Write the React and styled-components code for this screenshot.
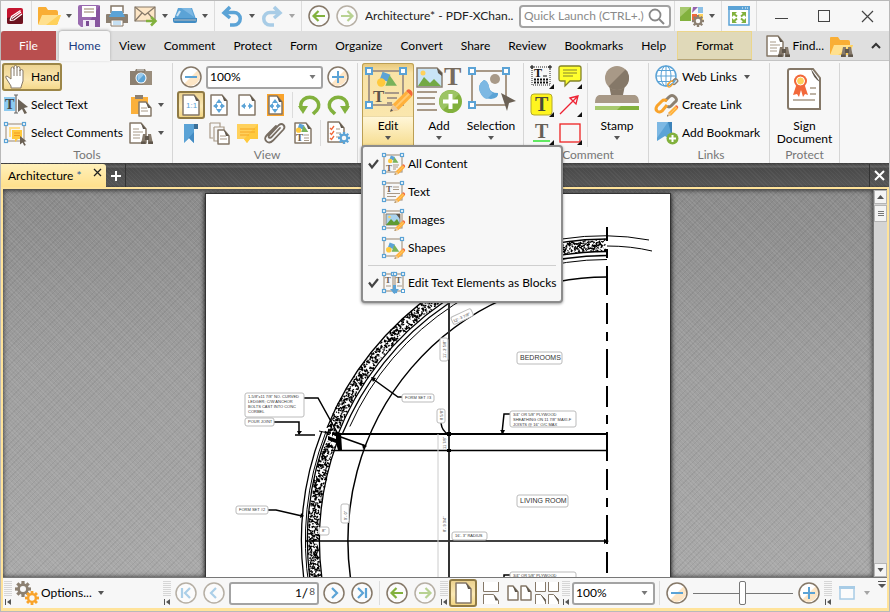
import React from "react";
import styled, { createGlobalStyle, css } from "styled-components";

const C = {
  blue: "#5ba3d6", blueLight: "#8cc0e6", brown: "#8c8071", brownDark: "#6b6155",
  tan: "#a89987", cream: "#fde6c6", orange: "#f9a32b", yellow: "#ffd15c",
  green: "#82b13d", greenLight: "#a7c96f", line: "#857868",
};

const Global = createGlobalStyle`
  html, body, #root { height: 100%; }
  body { margin: 0; overflow: hidden; }
  *, *::before, *::after { box-sizing: border-box; }
  body, button, input, select {
    font-family: Lato, "Open Sans", sans-serif;
    font-size: 12px; line-height: 16px; color: #000;
  }
  button { border: 0; padding: 0; margin: 0; background: none; }
  svg { display: block; flex: none; overflow: visible; }
`;

/* ---------- layout ---------- */
const Window = styled.div`
  height: 100vh; display: flex; flex-direction: column;
  border: 1px solid #b9b9b9; background: #f7f7f7;
`;
const TitleBar = styled.header`
  flex: none; height: 30px; display: flex; align-items: center;
`;
const AppMark = styled.div`width: 27px; display: flex; justify-content: center;`;
const Tool = styled.button`
  flex: none; width: 28px; height: 28px; display: flex; align-items: center; justify-content: center;
  opacity: ${(p) => (p.$dim ? 0.5 : 1)};
  ${(p) => p.$on && css`
    border: 2px solid #8f7a45; border-radius: 3px;
    background: linear-gradient(#ecd28f, #fbe9b5 55%, #f3d683);
  `}
`;
const CaretButton = styled(Tool)`width: 12px;`;
const Divider = styled.i`
  flex: none; width: 1px; margin: 0 3px; align-self: stretch; background: #dcdcdc;
`;
const Caption = styled.h1`
  flex: 1; min-width: 0; margin: 0 4px; font: inherit; white-space: nowrap; overflow: hidden; color: #222;
`;
const Search = styled.label`
  flex: none; width: 152px; height: 23px; display: flex; align-items: center; padding: 0 4px 0 3px;
  border: 2px solid #a3a3a3; border-radius: 4px; background: #fff;
`;
const SearchInput = styled.input`
  flex: 1; min-width: 0; border: 0; padding: 0; outline: 0; background: none;
  &::placeholder { color: #8a8a8a; opacity: 1; }
`;
const WindowButton = styled(Tool)`width: 43px;`;
const CollapseButton = styled(Tool)`width: 26px; margin-left: 8px;`;

const TabRow = styled.nav`
  flex: none; height: 30px; display: flex; align-items: stretch; background: #dfdfdf;
  border-bottom: 1px solid #c4c4c4;
`;
const Tab = styled.button`
  flex: none; padding: 0 9px; white-space: nowrap;
`;
const FileTab = styled(Tab)`
  width: 55px; margin-right: 3px; background: #b94f4f; color: #fff; border-radius: 3px 0 0 0;
`;
const ActiveTab = styled(Tab)`
  width: 51px; margin-bottom: -1px; background: #f7f7f7; color: #1b3c80;
  border-radius: 3px 3px 0 0; box-shadow: 0 -1px 3px #aaa;
`;
const FormatTab = styled(Tab)`
  width: 75px; margin-left: 2px; background: #e0d9b9; border: 1px solid #ecd68b; border-bottom-color: #b7a677;
`;
const TabTail = styled.div`
  margin-left: auto; display: flex; align-items: center;
`;
const TextButton = styled.button`
  display: flex; align-items: center; gap: 2px; white-space: nowrap; margin-right: 3px;
`;

const Ribbon = styled.section`
  flex: none; height: 102px; display: flex; align-items: stretch; padding-top: 2px; overflow: visible;
`;
const Group = styled.div`
  flex: none; width: ${(p) => p.$w}px; padding-left: ${(p) => p.$pad ?? 4}px;
  display: flex; flex-direction: column; border-right: 1px solid #d6d6d6;
`;
const GroupBody = styled.div`flex: none; height: 84px; display: flex; justify-content: ${(p) => (p.$center ? "center" : "flex-start")};`;
const GroupLabel = styled.div`
  flex: none; text-align: center; color: #767676; line-height: 16px;
`;
const Column = styled.div`
  display: flex; flex-direction: column; align-items: flex-start; width: ${(p) => (p.$w ? p.$w + "px" : "auto")};
`;
const Row = styled.div`display: flex; align-items: center; height: 28px; align-self: stretch;`;
const RowDivider = styled(Divider)`align-self: center; height: 26px;`;
const WideTool = styled.button`
  height: 28px; display: flex; align-items: center; padding-right: 3px; white-space: nowrap; gap: 1px;
  ${(p) => p.$on && css`
    border-radius: 3px; box-shadow: inset 0 0 0 2px #9c8648;
    background: linear-gradient(#ecd28f, #fbe7b0 60%, #f3d683);
  `}
`;
const Slot = styled.span`width: ${(p) => (p.$narrow ? 18 : 28)}px; display: flex; justify-content: center;`;
const BigTool = styled.button`
  position: relative; flex: none; width: 52px; height: 84px;
  display: flex; flex-direction: column; align-items: center; line-height: 13px;
  ${(p) => p.$on && css`
    border-radius: 3px 3px 0 0; box-shadow: inset 0 0 0 1px #bb9f55;
    background: linear-gradient(#e6c678, #f9e3a6 10px, #fae6ad 53px, #d9bf78 53px, #fff6d8 54px, #f6dc8d);
  `}
`;
const BigIcon = styled.span`height: 52px; display: flex; align-items: center; margin-bottom: 4px;`;
const BigCaret = styled.span`margin-top: 4px;`;

const Combo = styled.label`
  flex: ${(p) => (p.$w ? "none" : 1)}; width: ${(p) => (p.$w ? p.$w + "px" : "auto")};
  height: 23px; display: flex; align-items: center; padding: 0 4px 0 2px; margin: 0 1px;
  border: 2px solid #a3a3a3; border-radius: 3px; background: #fff;
`;
const Choice = styled.select`
  appearance: none; flex: 1; min-width: 0; border: 0; padding: 0; background: none; outline: 0;
`;

const MenuAnchor = styled.div`position: relative; margin-right: -1px;`;
const Menu = styled.div`
  position: absolute; z-index: 5; left: -1px; top: 82px; width: 202px; padding: 3px 0 4px;
  border: 2px solid #8c8c8c; border-radius: 4px; background: #f7f7f7; box-shadow: 0 1px 3px #0006;
`;
const MenuItem = styled.button`
  width: 100%; height: 28px; display: flex; align-items: center; padding-left: 5px; white-space: nowrap;
`;
const Tick = styled.span`width: 14px; flex: none; display: flex;`;
const MenuIcon = styled.span`width: 26px; flex: none;`;
const MenuRule = styled.hr`border: 0; height: 1px; margin: 3px 5px; background: #cfcfcf;`;

const DocTabs = styled.nav`
  flex: none; height: 24px; display: flex; align-items: stretch; padding-top: 1px;
  background:
    repeating-linear-gradient(45deg, #ffffff0a 0 1px, #0000 1px 3px),
    linear-gradient(#3c3c3c, #646464 4px, #4a4a4a 5px, #555 22px, #444);
`;
const DocTab = styled.div`
  width: 105px; display: flex; align-items: flex-start; justify-content: space-between;
  padding: 4px 4px 0 7px; border-radius: 0 3px 0 0; white-space: nowrap;
  background: linear-gradient(#fff0ba, #ffe08c);
`;
const DocName = styled.button``;
const Star = styled.b`font-weight: 400; color: #2b5b95;`;
const DarkTool = styled.button`
  width: 20px; display: flex; align-items: center; justify-content: center;
  border-right: ${(p) => (p.$end ? 0 : 1)}px solid #333; border-left: ${(p) => (p.$end ? 1 : 0)}px solid #333;
  margin-left: ${(p) => (p.$end ? "auto" : 0)};
`;
const Frame = styled.main`
  flex: 1; min-height: 0; display: flex; flex-direction: column;
  border: 2px solid #ffe39a; border-bottom-width: 3px;
`;
const Viewer = styled.div`flex: 1; min-height: 0; display: flex; border-top: 1px solid #555;`;
const Canvas = styled.div`
  flex: 1; min-width: 0; overflow: hidden; display: flex; justify-content: center; align-items: flex-start;
  padding-top: 3px; box-shadow: inset 0 0 5px #000b;
  background:
    repeating-linear-gradient(45deg, #ffffff14 0 1px, #0000 1px 3px),
    repeating-linear-gradient(-45deg, #0000000f 0 1px, #0000 1px 4px),
    linear-gradient(#8b8b8b, #9e9e9e 45%, #a9a9a9);
`;
const Sheet = styled.article`
  background: #fff; border: 1px solid #333; border-width: 1px 1px 0; box-shadow: 0 1px 5px #000;
  overflow: hidden;
`;
const ScrollTrack = styled.div`
  flex: none; width: 14px; display: flex; flex-direction: column; background: #d4d4d4; border-left: 1px solid #777;
`;
const ScrollButton = styled.button`
  height: 14px; display: flex; align-items: center; justify-content: center; background: #f4f4f4; border: 1px solid #b5b5b5;
`;
const ScrollThumb = styled(ScrollButton)`height: 17px; margin: 1px 0 auto;`;

const StatusBar = styled.footer`
  flex: none; height: 31px; display: flex; align-items: center; border-top: 1px solid #777; background: #f7f7f7;
`;
const Grip = styled.span`width: 10px; flex: none; display: flex; justify-content: center;`;
const OptionsBox = styled.div`width: 149px; display: flex; align-items: center;`;
const StatusDivider = styled(Divider)`align-self: center; height: 24px;`;
const PageBox = styled.label`
  flex: none; width: 90px; height: 23px; margin: 0 1px; padding: 0 2px; display: flex; align-items: center;
  border: 2px solid #a3a3a3; border-radius: 3px; background: #fff;
`;
const PageInput = styled.input`flex: 1; min-width: 0; border: 0; padding: 0; text-align: right; background: none;`;
const PageTotal = styled.span`display: flex; align-items: center; gap: 1px; font-size: 14px;`;
const PageCount = styled.small`font-size: 10px; line-height: 12px; align-self: flex-start; color: #555;`;
const Slider = styled.input`
  appearance: none; flex: 0 1 104px; min-width: 60px; height: 26px; margin: 0; padding: 0 2px; background: none;
  &::-webkit-slider-runnable-track { height: 1px; background: #777; }
  &::-webkit-slider-thumb {
    appearance: none; width: 7px; height: 24px; margin-top: -12px;
    border: 1px solid #777; border-radius: 2px; background: #fff;
  }
`;
const Tail = styled.div`margin-left: auto; align-self: flex-start; padding: 3px 1px 0 0;`;

/* ---------- icons ---------- */
const Ico = ({ s = 24, w = s, h = s, vb, children }) => (
  <svg width={w} height={h} viewBox={vb || `0 0 ${w} ${h}`} fill="none" aria-hidden="true">{children}</svg>
);
const Caret = ({ c = "#555", w = 6 }) => <Ico w={w} h={4} vb="0 0 6 4"><path d="M0 0h6L3 4z" fill={c} /></Ico>;
const Drop = ({ label, dim }) => <CaretButton aria-label={label} $dim={dim}><Caret /></CaretButton>;
const Pencil = ({ x = 0, y = 0, k = 1 }) => (
  <g transform={`translate(${x} ${y}) scale(${k})`}>
    <path d="M0 12l1.500-4L8.500 1l3 3-7 7z" fill="#ffb03b" />
    <path d="M0 12l1.500-4 3 3z" fill="#e8c9a0" /><path d="M0 12l.6-1.600 1 1z" fill="#555" />
    <path d="M8.500 1q1-1.500 2.500-.3t.5 3.300z" fill="#f2683a" />
    <path d="M3 9.500L10 2.500" stroke="#ffc971" />
  </g>
);
const Nodes = ({ x, y, w, h, r = 3, c = C.tan }) => (
  <g>
    <rect x={x} y={y} width={w} height={h} stroke={c} strokeWidth={r > 3 ? 2 : 1.2} />
    {[[x, y], [x + w, y], [x, y + h]].map(([a, b]) => (
      <rect key={`${a}-${b}`} x={a - r / 2} y={b - r / 2} width={r} height={r} fill="#fff" stroke={C.blue} strokeWidth={r > 3 ? 2 : 1.200} />
    ))}
  </g>
);
const LetterT = ({ x, y, s, c = "#6b6155" }) => (
  <text x={x} y={y} fontSize={s} fontFamily="Liberation Serif, serif" fontWeight="700" fill={c}>T</text>
);
const Paper = ({ x = 4, y = 1, w = 15, h = 20, c = C.line, fill = "#fff" }) => (
  <g>
    <path d={`M${x} ${y}h${w - 5}l5 6v${h - 6}h${-w}z`} fill={fill} stroke={c} strokeWidth="1.500" strokeLinejoin="round" />
    <path d={`M${x + w - 5} ${y}l5 6h-3z`} fill="#5e564c" />
  </g>
);
const Binoculars = ({ x, y }) => (
  <g transform={`translate(${x} ${y})`} fill="#85796b">
    <path d="M1 6l1-5h3v10H0zM11 6l-1-5H7v10h5z" /><path d="M4 3h4v4H4z" fill="#5f564b" />
    <path d="M0 8.500h4.500V11H0zM7.500 8.500H12V11H7.500z" fill="#5f564b" />
  </g>
);
const Gear = ({ x, y, r = 6, c = C.brown, hole = "#f7f7f7" }) => (
  <g transform={`translate(${x} ${y})`}>
    {[0, 45, 90, 135].map((a) => (
      <rect key={a} x={-r / 5} y={-r} width={(r * 2) / 5} height={r * 2} fill={c} transform={`rotate(${a})`} />
    ))}
    <circle r={r * 0.72} fill={c} /><circle r={r * 0.38} fill={hole} />
  </g>
);
const LogoIcon = () => (
  <Ico s={16}><rect width="16" height="16" rx="2" fill="#c4152f" /><path d="M0 10l16-4v8a2 2 0 0 1-2 2H2a2 2 0 0 1-2-2z" fill="#6d1420" />
    <path d="M3 12.500l1.500-4 9-6M3 12.500l4-.5 8-6M5 10.500l9-6.500" stroke="#fff" strokeWidth="1.200" /></Ico>
);
const FolderIcon = ({ find }) => (
  <Ico s={24}><path d="M1 4q0-1 1-1h7l2 3h8q2 0 2 2v12H1z" fill="#f9ae35" />
    <path d="M5 11h19l-4 10H1z" fill="#ffe08e" /><path d="M9 21L22 11h2l-4 10z" fill="#ffd15c" />
    {find && <Binoculars x={12} y={12} />}</Ico>
);
const SaveIcon = () => (
  <Ico s={22}><path d="M0 2q0-2 2-2h18q2 0 2 2v18q0 2-2 2H3l-3-3z" fill="#9a6bb0" /><path d="M22 0v22H8z" fill="#87549f" />
    <path d="M4 1h14v11H4z" fill="#fff" /><path d="M6 4h10M6 7h10" stroke="#b9aa98" strokeWidth="1.500" /><path d="M5 15h12v7H5z" fill="#f0e8f4" /><path d="M8 16h3v5H8z" fill="#7b4b93" /></Ico>
);
const PrintIcon = () => (
  <Ico s={22}><path d="M5 8V1h12v7" fill="#fff" stroke={C.line} strokeWidth="1.500" /><path d="M1 9h20q1 0 1 1v8H0v-8q0-1 1-1z" fill={C.brown} />
    <path d="M6 6h10l3 6H3z" fill={C.blue} /><path d="M5 15h12v6H5z" fill="#fff" stroke={C.line} /><path d="M7 17h8M7 19h8" stroke={C.blueLight} /></Ico>
);
const MailIcon = () => (
  <Ico s={23}><path d="M1 2h20v14H1z" fill={C.cream} stroke={C.line} strokeWidth="1.200" /><path d="M1 2l10 8L21 2M1 16l7-8M21 16l-7-8" stroke={C.line} strokeWidth="1.200" />
    <path d="M12 16h8M17 12l4.500 4-4.500 4.500" stroke={C.green} strokeWidth="2.500" /></Ico>
);
const ScanIcon = () => (
  <Ico s={24}><path d="M5 4h14l4 11H1z" fill={C.blue} /><path d="M8 4h10l3 9z" fill="#7db8e3" /><path d="M7 7l-3 5" stroke="#c9e2f4" strokeWidth="2" /><path d="M0 14h24v3q0 2-2 2H2q-2 0-2-2z" fill="#418cc4" /><path d="M1 16h22" stroke="#bbb" /></Ico>
);
const UndoIcon = ({ flip }) => (
  <Ico s={22}><g transform={flip ? "translate(22 0) scale(-1 1)" : undefined}><path d="M9 2L3 8l6 5M4 7.500h9a6 6 0 0 1 0 12.500H9" stroke={C.blue} strokeWidth="3.500" /></g></Ico>
);
const Round = ({ dim, fill = "#fbfbfb", children }) => (
  <Ico s={22}><circle cx="11" cy="11" r="10" fill={fill} stroke={dim ? "#b6afa4" : C.line} strokeWidth="1.500" />{children}</Ico>
);
const ArrowRound = ({ right, dim }) => (
  <Round dim={dim}><path d={right ? "M5 11h11M11.500 6l5 5-5 5" : "M17 11H6M10.500 6l-5 5 5 5"} stroke={C.green} strokeWidth="2.200" opacity={dim ? 0.55 : 1} /></Round>
);
const StepRound = ({ d, dim }) => <Round dim={dim}><path d={d} stroke={C.blue} strokeWidth="2.200" opacity={dim ? 0.5 : 1} /></Round>;
const ZoomRound = ({ plus }) => (
  <Ico s={22}><circle cx="11" cy="11" r="10" fill="#fff" /><path d="M18 4A10 10 0 0 1 4 18z" fill={C.cream} /><circle cx="11" cy="11" r="10" stroke={C.line} strokeWidth="1.500" />
    <path d={plus ? "M5 11h12M11 5v12" : "M5 11h12"} stroke={C.blue} strokeWidth="2" /></Ico>
);
const LensIcon = () => <Ico s={17}><circle cx="7" cy="7" r="5.500" stroke="#888" strokeWidth="1.800" /><path d="M11 11l5 5" stroke="#888" strokeWidth="2" /></Ico>;
const UiIcon = () => (
  <Ico s={24}><path d="M0 3h11v14H0z" fill={C.green} /><path d="M0 3h11L0 13z" fill={C.greenLight} /><path d="M13 3h5l-6 6z" fill="#9462ad" /><path d="M18 3h5v6h-5z" fill={C.blueLight} />
    <path d="M12 10h5v7h-5z" fill="#f2683a" /><path d="M18 10h5v7h-5z" fill={C.yellow} /><Gear x={18} y={17} r={6} /></Ico>
);
const FullIcon = () => (
  <Ico s={22}><path d="M1 2h20v18H1z" fill="#fff" stroke={C.blue} strokeWidth="1.500" /><path d="M0 1h22v4H0z" fill={C.blue} /><path d="M14 3h1M17 3h1M19 3h1" stroke="#fff" />
    <g fill={C.green}><path d="M4 7h5L4 12zM18 7h-5l5 5zM4 18h5l-5-5zM18 18h-5l5-5z" /></g><path d="M5 8l4 3.500M17 8l-4 3.500M5 17l4-3.500M17 17l-4-3.500" stroke={C.green} strokeWidth="2" /></Ico>
);
const PaperFind = ({ s = 24 }) => (
  <Ico s={s}><Paper x={1} y={2} w={16} h={20} /><path d="M4 8h6M4 11h10M4 14h7M4 17h7" stroke={C.tan} strokeWidth="1.200" /><Binoculars x={12} y={12} /></Ico>
);
const HandIcon = () => (
  <Ico s={24}><path d="M7 21L2 13q-1-2 1-2l4 3V4q0-2 1.500-2T10 4V2q0-1.500 1.500-1.500T13 2v1q0-1.500 1.500-1.500T16 3.500V6q0-1.500 1.500-1.500T19 6v10l-2 6v1H7z" fill="#fff" stroke={C.line} strokeWidth="1" /><path d="M10 4v7M13 3v8M16 5v6" stroke={C.line} /></Ico>
);
const Cursor = ({ x, y, k = 1 }) => <path transform={`translate(${x} ${y}) scale(${k})`} d="M0 0l10 8-4 1 3 5-2.500 1L4 10l-4 3z" fill="#6b6155" />;
const SelectTextIcon = () => (
  <Ico s={24}><path d="M0 4h11v14H0z" fill="#8ccaf0" /><LetterT x={1} y={16} s={14} c="#444" /><path d="M10 2h4M10 20h4M12 2v18" stroke="#666" strokeWidth="1.200" /><Cursor x={14} y={6} k={1} /></Ico>
);
const SelectCommentsIcon = () => (
  <Ico s={24}><Nodes x={2} y={3} w={18} h={17} /><path d="M5 6h11v2H7v8H5z" fill="#ffdf8c" /><path d="M8 9h10v9h-4l-3 3v-3H8z" fill="#ffc93c" /><path d="M10 12h6M10 14.500h6" stroke="#f29a1f" /><Cursor x={16} y={15} k={0.65} /></Ico>
);
const CameraIcon = () => (
  <Ico s={22}><path d="M0 5h5l1-2h9l1 2h6v14H0z" fill={C.brown} /><path d="M15 5h7v14h-9z" fill="#9b8e7d" /><circle cx="11" cy="12" r="5.500" fill="#fff" /><circle cx="11" cy="12" r="4.500" fill={C.blue} /><path d="M7.500 9a4.500 4.500 0 0 1 6.500-.5L8 15z" fill="#9bcbed" /><path d="M7 4h7" stroke="#ddd" /></Ico>
);
const PasteIcon = () => (
  <Ico s={22}><path d="M1 3h17v17H1z" fill="#fbb03b" /><path d="M5 1h8v4H5z" fill={C.brown} /><Paper x={9} y={8} w={12} h={14} /><path d="M11 14h6M11 17h7" stroke={C.tan} /></Ico>
);
const FitPage = ({ mode }) => (
  <Ico s={22}>{mode === "visible" && <path d="M3 0h17v22H3z" fill="#f9a32b" />}<Paper x={mode === "visible" ? 5 : 3} y={mode === "visible" ? 2 : 1} w={mode === "visible" ? 13 : 16} h={mode === "visible" ? 18 : 20} />
    {mode === "actual" && <text x="6" y="14" fontSize="8" fill={C.blue} fontFamily="Liberation Sans, sans-serif">1:1</text>}
    {mode !== "actual" && <path d="M5 12l4-3v6zM17 12l-4-3v6z" fill={C.blue} />}
    {(mode === "page" || mode === "visible") && <path d="M11 5l-3 4h6zM11 19l-3-4h6z" fill={C.blue} />}
    {mode !== "actual" && <path d="M8 12h2M12 12h2" stroke={C.blue} strokeWidth="1.500" />}</Ico>
);
const RotateIcon = ({ flip }) => (
  <Ico s={24}><g transform={flip ? "translate(24 0) scale(-1 1)" : undefined}><path d="M4.500 17A9 8 0 1 1 19 17l-4 4" stroke={C.green} strokeWidth="3.500" /><path d="M0 13h10l-5 8z" fill={C.green} /></g></Ico>
);
const BookmarkIcon = ({ add }) => (
  <Ico s={24}>{add ? <g><path d="M2 1h15v19l-7-5-8 5z" fill={C.blue} /><path d="M13 1h4v15z" fill="#3c82b9" /><path d="M2 1h11L2 17z" fill="#7db8e3" /><circle cx="17.500" cy="17.500" r="6" fill={C.green} /><path d="M14 17.500h7M17.500 14v7" stroke="#fff" strokeWidth="2" /></g>
    : <g><path d="M5 3h10v19l-5-5-5 5z" fill={C.blue} /><path d="M15 3h4v5h-4z" fill="#3c6f96" /><path d="M5 22l10-11v11l-5-5z" fill="#438bc3" /></g>}</Ico>
);
const PagesIcon = () => <Ico s={23}><path d="M2 1h10v4M2 1v15h3M6 5h10v3M6 5v14h4" stroke={C.tan} strokeWidth="1.200" /><Paper x={10} y={8} w={11} h={14} /><path d="M12 14h6M12 17h7" stroke={C.tan} /></Ico>;
const CommentIcon = () => <Ico s={23}><path d="M1 2h21v15h-8l-3 4-3-4H1z" fill={C.yellow} /><path d="M22 2v15h-8l-3 4-3-4z" fill="#ffc93c" /><path d="M4 7h15M4 10h15M4 13h9" stroke="#f5a623" /></Ico>;
const ClipIcon = () => <Ico s={24}><path d="M17 7L8.500 16q-1.500 1.500-2.500.5t.5-2.500L16 4q2.500-2 4.500 0t0 4.500L10 19.500q-3.500 3.500-6.500.8t.5-6.300L13 5" stroke="#776d62" strokeWidth="1.800" strokeLinecap="round" /></Ico>;
const Shapes = ({ x = 0, y = 0, k = 1 }) => (
  <g transform={`translate(${x} ${y}) scale(${k})`}><path d="M4 2h8v7H4z" fill={C.blue} transform="rotate(20 8 5)" /><path d="M12 4l7 10H8z" fill="#79b25a" /><circle cx="4" cy="11" r="4" fill="#ffc93c" /></g>
);
const ContentPane = () => <Ico s={22}><Paper x={3} y={1} w={16} h={20} /><Shapes x={4} y={1} k={0.65} /><LetterT x={4} y={19} s={11} /><path d="M12 13h5M12 16h5M12 18.500h5" stroke={C.tan} /></Ico>;
const PaneOptions = () => <Ico s={24}><Paper x={2} y={1} w={16} h={20} /><path d="M4 7l1.500 1.500L8 5M4 12l1.500 1.500L8 10M4 17l1.500 1.500L8 15" stroke="#f2683a" strokeWidth="1.300" /><path d="M10 8h4M10 12h5M10 16h4" stroke={C.tan} /><Gear x={18} y={17} r={6} c={C.blue} /></Ico>;

const EditBig = () => (
  <Ico w={48} h={48}><Nodes x={5} y={6} w={34} h={34} r={6} /><Shapes x={13} y={6} k={1.050} /><LetterT x={9} y={37} s={17} c="#5f564b" /><path d="M21 28h14M23 33h10M23 38h5" stroke={C.tan} strokeWidth="2" />
    <Pencil x={26} y={24} k={1.900} /></Ico>
);
const AddBig = () => (
  <Ico w={48} h={48}><path d="M2 3h20l5 5v14H2z" fill="#c9e4f6" stroke={C.brown} strokeWidth="1.500" /><path d="M3 21l6-9 6 6 4-4 7 7z" fill="#73a945" /><circle cx="8" cy="8" r="2.500" fill={C.yellow} /><path d="M22 3l5 5v3l-4-3z" fill="#5e564c" />
    <LetterT x={29} y={20} s={26} c="#776b5e" /><path d="M2 27h20M2 33h18M2 39h18M2 45h20" stroke={C.tan} strokeWidth="2" /><circle cx="35.500" cy="36.500" r="11.500" fill={C.green} /><path d="M27 29a11.500 11.500 0 0 1 17 0L28 45a11.500 11.500 0 0 1-1-16z" fill="#9cc463" /><path d="M28 36.500h15M35.500 29v15" stroke="#fff" strokeWidth="4" /></Ico>
);
const SelectionBig = () => (
  <Ico w={48} h={48}><Nodes x={5} y={6} w={34} h={34} r={6} /><circle cx="28" cy="14" r="5" fill={C.tan} /><path d="M17 15q-7 5-4 12t11 7q8-1 7-6-8 0-9-6t-5-7z" fill={C.blue} /><path d="M17 15q-7 5-4 12t7 7l6-6q-4-2-4-6t-5-7z" fill="#7db8e3" /><path d="M34 28l15 8-7 2-2 8z" fill="#6b6155" /></Ico>
);
const StampBig = () => (
  <Ico w={46} h={48}><path d="M18 20h10l1 10h12q4 1 4 8H1q0-7 4-8h12z" fill={C.tan} /><path d="M15 20h16l-2 10H17z" fill="#857868" /><circle cx="23" cy="13" r="12" fill={C.tan} /><path d="M31.500 4.500A12 12 0 0 1 14.500 21.500z" fill="#857868" /><path d="M1 41h44v4H1z" fill={C.green} /><path d="M1 41h26l-4 4H1z" fill={C.greenLight} /></Ico>
);
const SignBig = () => (
  <Ico w={36} h={48}><path d="M3 4h23l7 9v31H3q-2 0-2-2V6q0-2 2-2z" fill="#fff" stroke={C.line} strokeWidth="2" /><path d="M24 4l9 13q-7-4-9-13z" fill="#5e564c" />
    <path d="M9 21l-3 9 4-1 2 3 2-7 2 7 2-3 3 1-3-9z" fill="#f2683a" /><circle cx="13.500" cy="16" r="6.500" fill="#f2683a" /><circle cx="13.500" cy="16" r="4" fill={C.yellow} stroke="#fff" /><path d="M23 23h6M23 29h6M6 35h22" stroke={C.tan} strokeWidth="1.500" /></Ico>
);
const Corner = () => <path d="M24 19v5h-5z" fill="#111" />;
const TypeIcon = () => <Ico s={24}><rect x="2" y="2" width="18" height="18" stroke="#222" strokeDasharray="1 1" /><path d="M1 1h2v2H1zM19 1h2v2h-2z" stroke="#000" fill="#fff" /><LetterT x={4} y={12} s={12} c="#111" /><path d="M13 11h4" stroke="#111" /><path d="M4 14.500h14M4 17.500h14" stroke="#111" strokeWidth="2" strokeDasharray="2 1" /><Corner /></Ico>;
const StickyIcon = () => <Ico s={24}><path d="M3 1h18q2 0 2 2v11q0 2-2 2H12l-5 5v-5H3q-2 0-2-2V3q0-2 2-2z" fill="#ffff2e" stroke="#84842a" strokeWidth="1.300" /><path d="M5 5h14M5 8h14M5 11h10" stroke="#85852d" /><Corner /></Ico>;
const HighlightIcon = () => <Ico s={24}><rect x="1" y="1" width="21" height="21" rx="3" fill="#fff51f" stroke="#b3a92a" /><LetterT x={5} y={18} s={20} c="#4a4a3a" /><Corner /></Ico>;
const ArrowIcon = () => <Ico s={24}><path d="M2 21L19 4M12 5l8-2-2 8z" stroke="#e23" strokeWidth="1.300" /><Corner /></Ico>;
const UnderlineIcon = () => <Ico s={24}><LetterT x={5} y={17} s={20} c="#666058" /><path d="M3 20h17" stroke="#2fe52f" strokeWidth="1.500" /><Corner /></Ico>;
const RectIcon = () => <Ico s={24}><rect x="2" y="3" width="20" height="18" stroke="#e22" strokeWidth="1.300" /><Corner /></Ico>;
const Chain = ({ x = 0, y = 0, k = 1 }) => (
  <g transform={`translate(${x} ${y}) scale(${k})`}><path d="M10 9l4-4q3-3 6 0t0 5l-4 4q-2 2-4 0" stroke={C.brown} strokeWidth="3" /><path d="M12 13l-5 6q-3 2-5 0t0-5l5-5q2-2 5 0" stroke={C.orange} strokeWidth="3" /></g>
);
const WebIcon = () => <Ico s={24}><circle cx="11" cy="11" r="10" fill="#fff" stroke={C.blue} strokeWidth="1.500" /><path d="M11 1v20M1 11h20M3 5.500h16M3 16.500h16" stroke={C.blue} /><ellipse cx="11" cy="11" rx="5" ry="10" stroke={C.blue} /><Chain x={12} y={12} k={0.5} /></Ico>;
const LinkIcon = () => <Ico s={24}><Chain x={0} y={-1} /><Pencil x={12} y={12} k={0.95} /></Ico>;
const MenuArt = ({ kind }) => (
  <Ico s={24}>
    {kind === "blocks" ? (
      <g><Nodes x={2} y={3} w={9} h={17} r={3} /><Nodes x={13} y={3} w={8} h={17} r={3} /><rect x="19.500" y="18.500" width="3" height="3" fill="#fff" stroke={C.blue} /><LetterT x={3} y={12} s={9} /><LetterT x={13.500} y={12} s={9} /><path d="M4 15h5M15 15h5" stroke={C.tan} /><path d="M8 18h3v-4h3v4h3l-4.500 5z" fill={C.blue} /></g>
    ) : (
      <g><Nodes x={2} y={3} w={18} h={17} r={3} />
        {kind === "all" && <g><Shapes x={6} y={3} k={0.55} /><LetterT x={4} y={19} s={9} /><path d="M11 13h6M11 15h5M11 17h3" stroke={C.tan} /></g>}
        {kind === "text" && <g><LetterT x={4} y={12} s={9} /><path d="M11 7h6M11 9.500h6M5 13.500h13M5 16.500h9" stroke={C.tan} /></g>}
        {kind === "images" && <g><path d="M4 6h14v11H4z" fill="#a9d3ef" stroke={C.brown} /><path d="M4 17l5-6 3 3 3-3 3 5v1z" fill="#5f9a33" /><circle cx="7.500" cy="9" r="1.300" fill={C.yellow} /><path d="M14 6h4v5z" fill="#5e564c" /></g>}
        {kind === "shapes" && <Shapes x={4} y={6} k={0.7} />}
        <Pencil x={12.500} y={12} k={0.9} /></g>
    )}
  </Ico>
);
const TickIcon = () => <Ico w={11} h={10}><path d="M1 4.500L4 8.500L10 1" stroke="#444" strokeWidth="2.200" /></Ico>;
const GripIcon = () => (
  <Ico w={8} h={24}><path d="M1 0v16M3 0v16M5 0v16M7 0v16" stroke="#b5b5b5" strokeDasharray="1 1" /><path d="M1.500 18v6" stroke="#555" /><path d="M7 18v6l-4-3z" fill="#555" /></Ico>
);
const Single = () => <Ico w={17} h={22}><Paper x={1} y={1} w={15} h={20} /></Ico>;
const Continuous = () => <Ico w={17} h={22}><path d="M.5 0v9.500h15V0" fill="#fff" stroke={C.line} /><path d="M.5 22v-9.500h10l5 6V22" stroke={C.line} fill="#fff" /><path d="M10.500 12.500l5 6h-3z" fill="#5e564c" /></Ico>;
const Facing = () => <Ico w={24} h={22}><Paper x={1} y={4} w={10} h={14} /><Paper x={14} y={4} w={10} h={14} /></Ico>;
const FacingContinuous = () => <Ico w={24} h={22}><path d="M.5 0v9.500h10V0M13.500 0v9.500h10V0" fill="#fff" stroke={C.line} /><path d="M.5 22v-9.500h5l5 5V22M13.500 22v-9.500h5l5 5V22" fill="#fff" stroke={C.line} /><path d="M5.500 12.500l5 5v3zM18.500 12.500l5 5v3z" fill="#5e564c" /></Ico>;

/* ---------- architectural drawing ---------- */
const CX = 607, CY = 541;
const at = (r, deg) => [CX - r * Math.cos((deg * Math.PI) / 180), CY - r * Math.sin((deg * Math.PI) / 180)];
const arc = (r, a, b) => {
  const [x1, y1] = at(r, a), [x2, y2] = at(r, b);
  return `M${x1} ${y1}A${r} ${r} 0 0 1 ${x2} ${y2}`;
};
const speckle = (r1, r2, a, b, count) => {
  let seed = 7, d = "";
  const rnd = () => ((seed = (seed * 16807) % 2147483647) / 2147483647);
  for (let i = 0; i < count; i++) {
    const [x, y] = at(r1 + 1 + rnd() * (r2 - r1 - 2), a + rnd() * (b - a));
    d += `M${x.toFixed(1)} ${y.toFixed(1)}l${(rnd() * 4 - 2).toFixed(1)} ${(rnd() * 4 - 2).toFixed(1)}`;
  }
  return d;
};
const Note = ({ x, y, w, h, lines, s = 5 }) => (
  <g>
    <rect x={x} y={y} width={w} height={h} rx="2" fill="#fff" stroke="#bbb" />
    {lines.map((t, i) => <text key={t} x={x + 3} y={y + s + 1 + i * (s + 1)} fontSize={s} fill="#333">{t}</text>)}
  </g>
);
const Upright = ({ x, y, w = 8, h, t }) => (
  <g><rect x={x} y={y} width={w} height={h} rx="2" fill="#fff" stroke="#bbb" />
    <text transform={`translate(${x + w - 2} ${y + h - 3}) rotate(-90)`} fontSize="4" fill="#333">{t}</text></g>
);
const Plan = () => (
  <svg width="464" height="384" viewBox="206 194 464 384" fill="none" stroke="none" fontFamily="Liberation Sans, sans-serif" role="img" aria-label="Architecture section">
    <g stroke="#000" strokeWidth="1.300">
      <path d={arc(302, 22, 90)} /><path d={arc(289.500, 21, 90)} /><path d={arc(285.500, 22, 90)} /><path d={arc(281.500, 24, 90)} strokeWidth="1" />
      <path d={arc(299.500, -9, 22)} /><path d={arc(287.500, -9, 20)} />
      <path d={arc(305.500, -9, 21)} /><path d={arc(301.500, -9, 21)} strokeWidth="1" />
      <path d="M319 431l9 2M562 239q45-7 87 1M607 246q24 0 45 5" strokeWidth="1" />
      <path d="M350.500 578A259 264 0 0 1 607 277" strokeWidth="1.500" />
      <path d={speckle(289.500, 302, 21, 90, 1350)} /><path d={speckle(287.500, 299.500, -8, 20, 540)} />
    </g>
    <path d="M336 432l5 1 1 17h-4l-2-7zM328 436l8 3v4l-8-3z" fill="#000" />
    <g stroke="#000">
      <path d="M332 434h275" strokeWidth="2" /><path d="M331 450.500h276" strokeWidth="1.500" /><path d="M306 541h302" strokeWidth="1.500" />
      <path d="M449 300v278" stroke="#333" strokeWidth="2" /><path d="M438 434v144" stroke="#ccc" />
      <path d="M607 227v351" strokeWidth="2" strokeDasharray="9 8 29 8 21 8" strokeDashoffset="61" />
      <path d="M304 398h14l20 36M274 422h25v12M295 435h20M373 379l25 18h5M268 510h8l26 6M512 414h-8l-2 19M441 423q1 8 7 11M338 436l28 10M512 575h-8v3" strokeWidth="1.500" />
    </g>
    <path d="M371 377l5 1-3 4zM301 513l3 3-4 2zM500 430h5l-2 4zM297 431h5l-3 4zM604 539l5 2-5 3zM362 444l5 2-4 3zM447 432h4v4h-4zM447 449h4v3h-4z" fill="#000" />
    <Note x={245} y={393} w={59} h={24} lines={['1-5/8"x11 7/8" NO. CURVED', "LEDGER; C/W ANCHOR", "BOLTS CAST INTO CONC", "CORBEL"]} s={4} />
    <Note x={245} y={418} w={29} h={8} lines={["POUR JOINT"]} s={4} />
    <Note x={402} y={394} w={32} h={8} lines={["FORM SET #3"]} s={4} />
    <Note x={236} y={506} w={32} h={8} lines={["FORM SET #2"]} s={4} />
    <Note x={510} y={411} w={66} h={16} lines={['3/4" OR 5/8" PLYWOOD', 'SHEATHING ON 11 7/8" MAXI-F', 'JOISTS @ 16" O/C MAX']} s={4} />
    <Note x={510} y={572} w={66} h={16} lines={['3/4" OR 5/8" PLYWOOD']} s={4} />
    <Note x={452} y={532} w={35} h={8} lines={["16'- 3\" RADIUS"]} s={4} />
    <Note x={319} y={527} w={10} h={8} lines={['8"']} s={4} />
    <Note x={517} y={352} w={45} h={12} lines={["BEDROOMS"]} s={7} />
    <Note x={517} y={495} w={51} h={12} lines={["LIVING ROOM"]} s={7} />
    <Upright x={440} y={338} h={23} t={"11'- 2 5/8\""} />
    <Upright x={437} y={409} h={14} t={'8 5/8"'} />
    <Upright x={341} y={504} h={19} t={"9'- 0\""} />
    <text transform="translate(446 449) rotate(-90)" fontSize="4" fill="#333">11 7/8"</text>
    <text transform="translate(446 532) rotate(-90)" fontSize="4" fill="#333">8'- 9 3/4"</text>
    <g transform="translate(453 323) rotate(-25)"><rect width="22" height="8" y="-6" rx="2" fill="#fff" stroke="#bbb" /><text x="1" fontSize="4" fill="#333">12'- 3 7/8"</text></g>
  </svg>
);

/* ---------- page ---------- */
const TABS = ["View", "Comment", "Protect", "Form", "Organize", "Convert", "Share", "Review", "Bookmarks", "Help"];
const ITEMS = [["all", "All Content", true], ["text", "Text"], ["images", "Images"], ["shapes", "Shapes"]];

const IconTool = ({ label, children, ...rest }) => <Tool aria-label={label} {...rest}>{children}</Tool>;
const Item = ({ kind, label, on }) => (
  <MenuItem role="menuitemcheckbox" aria-checked={!!on}><Tick>{on && <TickIcon />}</Tick><MenuIcon><MenuArt kind={kind} /></MenuIcon>{label}</MenuItem>
);
const ZoomCombo = ({ w }) => (
  <Combo $w={w}><Choice aria-label="Zoom level" defaultValue="100%"><option>50%</option><option>100%</option><option>200%</option></Choice><Caret w={9} c="#777" /></Combo>
);
const Big = ({ icon, label, caret, on, ...rest }) => (
  <BigTool $on={on} {...rest}><BigIcon>{icon}</BigIcon>{label}{caret && <BigCaret><Caret w={8} /></BigCaret>}</BigTool>
);
const Wide = ({ icon, label, on, caret }) => (
  <WideTool $on={on}><Slot>{icon}</Slot>{label}{caret && <Slot $narrow><Caret /></Slot>}</WideTool>
);

export default function App() {
  return (
    <Window>
      <Global />
      <TitleBar>
        <AppMark><LogoIcon /></AppMark>
        <Divider />
        <IconTool label="Open"><FolderIcon /></IconTool><Drop label="Open options" />
        <IconTool label="Save"><SaveIcon /></IconTool>
        <IconTool label="Print"><PrintIcon /></IconTool>
        <IconTool label="Send"><MailIcon /></IconTool><Drop label="Send options" />
        <IconTool label="Scan"><ScanIcon /></IconTool><Drop label="Scan options" />
        <Divider />
        <IconTool label="Undo"><UndoIcon /></IconTool><Drop label="Undo history" />
        <IconTool label="Redo" $dim><UndoIcon flip /></IconTool><Drop label="Redo history" dim />
        <Divider />
        <IconTool label="Previous view"><ArrowRound /></IconTool>
        <IconTool label="Next view"><ArrowRound right dim /></IconTool>
        <Caption>Architecture* - PDF-XChan..</Caption>
        <Search><SearchInput aria-label="Quick Launch" placeholder="Quick Launch (CTRL+.)" /><LensIcon /></Search>
        <Divider />
        <IconTool label="UI options"><UiIcon /></IconTool><Drop label="UI options list" />
        <Divider />
        <IconTool label="Full screen"><FullIcon /></IconTool>
        <Divider />
        <WindowButton aria-label="Minimize"><Ico s={13}><path d="M0 8.500h13" stroke="#444" /></Ico></WindowButton>
        <WindowButton aria-label="Maximize"><Ico s={13}><rect x=".5" y=".5" width="11" height="11" stroke="#444" /></Ico></WindowButton>
        <WindowButton aria-label="Close"><Ico s={13}><path d="M1 1l11 11M12 1L1 12" stroke="#444" strokeWidth="1.200" /></Ico></WindowButton>
      </TitleBar>

      <TabRow>
        <FileTab>File</FileTab><ActiveTab>Home</ActiveTab>
        {TABS.map((t) => <Tab key={t}>{t}</Tab>)}
        <FormatTab>Format</FormatTab>
        <TabTail>
          <TextButton><PaperFind />Find...</TextButton>
          <IconTool label="Search folder"><FolderIcon find /></IconTool>
          <CollapseButton aria-label="Collapse ribbon"><Ico w={10} h={7}><path d="M1 6l4-4 4 4" stroke="#333" strokeWidth="2" /></Ico></CollapseButton>
        </TabTail>
      </TabRow>

      <Ribbon>
        <Group $w={172} $pad={1}>
          <GroupBody>
            <Column $w={125}>
              <Wide on icon={<HandIcon />} label="Hand" />
              <Wide icon={<SelectTextIcon />} label="Select Text" />
              <Wide icon={<SelectCommentsIcon />} label="Select Comments" />
            </Column>
            <Column>
              <IconTool label="Snapshot"><CameraIcon /></IconTool>
              <Row><IconTool label="Paste"><PasteIcon /></IconTool><Drop label="Paste options" /></Row>
              <Row><IconTool label="Find"><PaperFind /></IconTool><Drop label="Find options" /></Row>
            </Column>
          </GroupBody>
          <GroupLabel>Tools</GroupLabel>
        </Group>
        <Group $w={185}>
          <GroupBody>
            <Column $w={175}>
              <Row><IconTool label="Zoom out"><ZoomRound /></IconTool><ZoomCombo /><IconTool label="Zoom in"><ZoomRound plus /></IconTool></Row>
              <Row>
                <IconTool label="Actual size" $on><FitPage mode="actual" /></IconTool><IconTool label="Fit page"><FitPage mode="page" /></IconTool>
                <IconTool label="Fit width"><FitPage mode="width" /></IconTool><IconTool label="Fit visible"><FitPage mode="visible" /></IconTool>
                <RowDivider />
                <IconTool label="Rotate left"><RotateIcon /></IconTool><IconTool label="Rotate right"><RotateIcon flip /></IconTool>
              </Row>
              <Row>
                <IconTool label="Bookmarks"><BookmarkIcon /></IconTool><IconTool label="Thumbnails"><PagesIcon /></IconTool>
                <IconTool label="Comments"><CommentIcon /></IconTool><IconTool label="Attachments"><ClipIcon /></IconTool>
                <IconTool label="Content"><ContentPane /></IconTool><RowDivider /><IconTool label="Panes"><PaneOptions /></IconTool>
              </Row>
            </Column>
          </GroupBody>
          <GroupLabel>View</GroupLabel>
        </Group>
        <Group $w={166}>
          <GroupBody>
            <MenuAnchor>
              <Big on caret icon={<EditBig />} label="Edit" aria-haspopup="menu" aria-expanded="true" />
              <Menu role="menu">
                {ITEMS.map(([k, l, on]) => <Item key={k} kind={k} label={l} on={on} />)}
                <MenuRule />
                <Item kind="blocks" label="Edit Text Elements as Blocks" on />
              </Menu>
            </MenuAnchor>
            <Big caret icon={<AddBig />} label="Add" />
            <Big caret icon={<SelectionBig />} label="Selection" />
          </GroupBody>
          <GroupLabel>Content</GroupLabel>
        </Group>
        <Group $w={125}>
          <GroupBody>
            <Column>
              <Row><IconTool label="Typewriter"><TypeIcon /></IconTool><IconTool label="Sticky note"><StickyIcon /></IconTool></Row>
              <Row><IconTool label="Highlight"><HighlightIcon /></IconTool><IconTool label="Arrow"><ArrowIcon /></IconTool></Row>
              <Row><IconTool label="Underline"><UnderlineIcon /></IconTool><IconTool label="Rectangle"><RectIcon /></IconTool></Row>
            </Column>
            <Divider />
            <Big caret icon={<StampBig />} label="Stamp" />
          </GroupBody>
          <GroupLabel>Comment</GroupLabel>
        </Group>
        <Group $w={121}>
          <GroupBody>
            <Column>
              <Wide icon={<WebIcon />} label="Web Links" caret />
              <Wide icon={<LinkIcon />} label="Create Link" />
              <Wide icon={<BookmarkIcon add />} label="Add Bookmark" />
            </Column>
          </GroupBody>
          <GroupLabel>Links</GroupLabel>
        </Group>
        <Group $w={70} $pad={0}>
          <GroupBody $center><Big icon={<SignBig />} label={<>Sign<br />Document</>} /></GroupBody>
          <GroupLabel>Protect</GroupLabel>
        </Group>
      </Ribbon>

      <DocTabs>
        <DocTab><DocName>Architecture <Star>*</Star></DocName><button aria-label="Close tab"><Ico s={9}><path d="M1 1l7 7M8 1L1 8" stroke="#222" strokeWidth="1.300" /></Ico></button></DocTab>
        <DarkTool aria-label="New tab"><Ico s={10}><path d="M0 5h10M5 0v10" stroke="#fff" strokeWidth="2" /></Ico></DarkTool>
        <DarkTool $end aria-label="Close document"><Ico s={11}><path d="M1 1l9 9M10 1L1 10" stroke="#fff" strokeWidth="2" /></Ico></DarkTool>
      </DocTabs>

      <Frame>
        <Viewer>
          <Canvas><Sheet><Plan /></Sheet></Canvas>
          <ScrollTrack>
            <ScrollButton aria-label="Scroll up"><Ico w={7} h={4}><path d="M0 4h7L3.500 0z" fill="#555" /></Ico></ScrollButton>
            <ScrollThumb aria-label="Scroll thumb"><Ico w={6} h={5}><path d="M0 .5h6M0 2.500h6M0 4.500h6" stroke="#777" /></Ico></ScrollThumb>
            <ScrollButton aria-label="Scroll down"><Caret w={7} /></ScrollButton>
          </ScrollTrack>
        </Viewer>
        <StatusBar>
          <Grip><GripIcon /></Grip>
          <OptionsBox><Slot><Ico s={24}><Gear x={8} y={8} r={8} /><Gear x={17} y={17} r={7} c={C.orange} /></Ico></Slot><TextButton>Options...</TextButton><Drop label="Options list" /></OptionsBox>
          <Grip><GripIcon /></Grip>
          <IconTool label="First page"><StepRound dim d="M7 6v10M15 6l-5 5 5 5" /></IconTool>
          <IconTool label="Previous page"><StepRound dim d="M13 6l-5 5 5 5" /></IconTool>
          <PageBox><PageInput aria-label="Page" defaultValue="1" /><PageTotal>/<PageCount>8</PageCount></PageTotal></PageBox>
          <IconTool label="Next page"><StepRound d="M9 6l5 5-5 5" /></IconTool>
          <IconTool label="Last page"><StepRound d="M7 6l5 5-5 5M15 6v10" /></IconTool>
          <StatusDivider />
          <IconTool label="Go back"><ArrowRound /></IconTool>
          <IconTool label="Go forward"><ArrowRound right dim /></IconTool>
          <Grip><GripIcon /></Grip>
          <IconTool label="Single page" $on><Single /></IconTool>
          <IconTool label="Continuous"><Continuous /></IconTool>
          <IconTool label="Two pages"><Facing /></IconTool>
          <IconTool label="Two pages continuous"><FacingContinuous /></IconTool>
          <Grip><GripIcon /></Grip>
          <ZoomCombo w={83} />
          <StatusDivider />
          <IconTool label="Zoom out"><ZoomRound /></IconTool>
          <Slider type="range" aria-label="Zoom" min="0" max="100" defaultValue="49" />
          <IconTool label="Zoom in"><ZoomRound plus /></IconTool>
          <Grip><GripIcon /></Grip>
          <IconTool label="Window layout" $dim><Ico w={16} h={14}><rect x="1" y="1" width="14" height="12" fill="#fff" stroke={C.blue} strokeWidth="1.500" /><path d="M0 1.500h16" stroke={C.blue} strokeWidth="3" /></Ico></IconTool>
          <Drop label="Window layout list" dim />
          <Tail><Ico w={8} h={7}><path d="M0 .5h8" stroke="#555" /><path d="M0 3h8L4 7z" fill="#555" /></Ico></Tail>
        </StatusBar>
      </Frame>
    </Window>
  );
}
